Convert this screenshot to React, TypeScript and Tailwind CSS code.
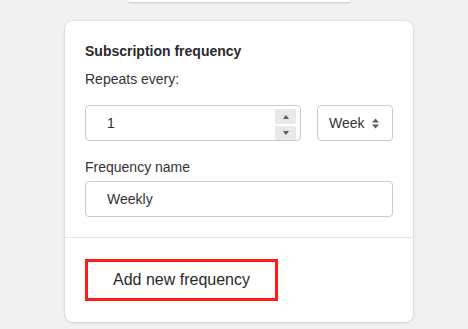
import React from "react";

export default function App() {
  return (
    <div
      className="w-[468px] h-[329px] bg-[#f1f1f1] overflow-hidden flex flex-col"
      style={{ fontFamily: '"Liberation Sans", Arial, sans-serif' }}
    >
      <div className="ml-[128px] w-[222px] h-[2px] bg-white rounded-b-[4px] shadow-[0_1px_2px_rgba(0,0,0,0.2)]" />
      <div className="ml-[65px] mt-[19px] w-[348px] bg-white rounded-[8px] shadow-[0_0_0_1px_rgba(63,63,68,0.05),0_1px_3px_0_rgba(63,63,68,0.15)]">
        <div className="px-[20px] pt-[20px] pb-[20px] flex flex-col">
          <div className="text-[14px] leading-[20px] font-bold text-[#2a2a2a]">Subscription frequency</div>
          <div className="mt-[8px] text-[14px] leading-[20px] text-[#333333]">Repeats every:</div>
          <div className="mt-[16px] flex gap-[16px]">
            <div className="relative w-[216px] h-[36px] border border-[#c4cdd5] rounded-[4px] flex items-center pl-[21px] text-[14px] text-[#333333]">
              1
              <div className="absolute right-[4px] top-[3px] flex flex-col gap-[2px]">
                <div className="w-[21px] h-[15px] bg-[#e8e8e8] rounded-[2px] flex items-center justify-center">
                  <svg width="6" height="4" viewBox="0 0 6 4"><path d="M0 4 L3 0 L6 4 Z" fill="#5c5f62" /></svg>
                </div>
                <div className="w-[21px] h-[14px] bg-[#e8e8e8] rounded-[2px] flex items-center justify-center">
                  <svg width="6" height="4" viewBox="0 0 6 4"><path d="M0 0 L3 4 L6 0 Z" fill="#5c5f62" /></svg>
                </div>
              </div>
            </div>
            <div className="w-[76px] h-[36px] border border-[#c4cdd5] rounded-[4px] flex items-center pl-[11px] text-[14px] text-[#333333]">
              <span>Week</span>
              <svg className="ml-[7px]" width="7" height="11" viewBox="0 0 7 11">
                <path d="M0 4.5 L3.5 0.5 L7 4.5 Z" fill="#5c5f62" />
                <path d="M0 6.5 L3.5 10.5 L7 6.5 Z" fill="#5c5f62" />
              </svg>
            </div>
          </div>
          <div className="mt-[16px] text-[14px] leading-[20px] text-[#333333]">Frequency name</div>
          <div className="mt-[4px] h-[36px] border border-[#c4cdd5] rounded-[4px] flex items-center pl-[21px] text-[14px] text-[#333333]">
            Weekly
          </div>
        </div>
        <div className="border-t border-[#e4e5e7] px-[20px] pt-[21px] pb-[21px]">
          <div className="w-[193px] h-[42px] border-[3px] border-[#ff1a1a] flex items-center justify-center text-[16px] font-medium text-[#2a2a2a]">
            Add new frequency
          </div>
        </div>
      </div>
    </div>
  );
}
